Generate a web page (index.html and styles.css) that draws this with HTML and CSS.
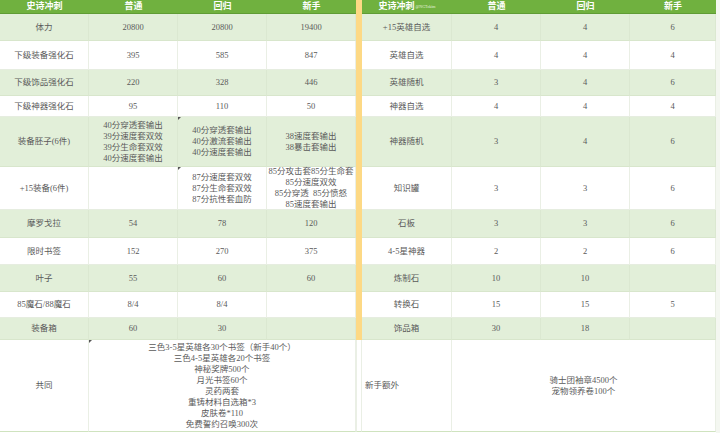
FILE: index.html
```html
<!DOCTYPE html>
<html lang="zh-CN">
<head>
<meta charset="utf-8">
<title>史诗冲刺</title>
<link rel="stylesheet" href="styles.css">
</head>
<body>
<div class="sheet">
  <div class="divider"></div>

  <div class="row head">
    <div class="c">史诗冲刺</div><div class="c">普通</div><div class="c">回归</div><div class="c">新手</div>
    <div class="c">史诗冲刺<span class="wm">@NGTokim</span></div><div class="c">普通</div><div class="c">回归</div><div class="c">新手</div>
  </div>

  <div class="row alt">
    <div class="c">体力</div><div class="c">20800</div><div class="c">20800</div><div class="c">19400</div>
    <div class="c">+15英雄自选</div><div class="c">4</div><div class="c">4</div><div class="c">6</div>
  </div>

  <div class="row">
    <div class="c">下级装备强化石</div><div class="c">395</div><div class="c">585</div><div class="c">847</div>
    <div class="c">英雄自选</div><div class="c">4</div><div class="c">4</div><div class="c">4</div>
  </div>

  <div class="row alt">
    <div class="c">下级饰品强化石</div><div class="c">220</div><div class="c">328</div><div class="c">446</div>
    <div class="c">英雄随机</div><div class="c">3</div><div class="c">4</div><div class="c">6</div>
  </div>

  <div class="row">
    <div class="c">下级神器强化石</div><div class="c">95</div><div class="c">110</div><div class="c">50</div>
    <div class="c">神器自选</div><div class="c">4</div><div class="c">4</div><div class="c">4</div>
  </div>

  <div class="row alt">
    <div class="c">装备胚子(6件)</div>
    <div class="c multi">40分穿透套输出<br>39分速度套双效<br>39分生命套双效<br>40分速度套输出</div>
    <div class="c multi note">40分穿透套输出<br>40分激流套输出<br>40分速度套输出</div>
    <div class="c multi">38速度套输出<br>38暴击套输出</div>
    <div class="c">神器随机</div><div class="c">3</div><div class="c">4</div><div class="c">6</div>
  </div>

  <div class="row">
    <div class="c">+15装备(6件)</div>
    <div class="c"></div>
    <div class="c multi note">87分速度套双效<br>87分生命套双效<br>87分抗性套血防</div>
    <div class="c multi">85分攻击套85分生命套<br>85分速度双效<br>85分穿透&nbsp;&nbsp;85分愤怒<br>85速度套输出</div>
    <div class="c">知识罐</div><div class="c">3</div><div class="c">3</div><div class="c">6</div>
  </div>

  <div class="row alt">
    <div class="c">摩罗戈拉</div><div class="c">54</div><div class="c">78</div><div class="c">120</div>
    <div class="c">石板</div><div class="c">3</div><div class="c">3</div><div class="c">6</div>
  </div>

  <div class="row">
    <div class="c">限时书签</div><div class="c">152</div><div class="c">270</div><div class="c">375</div>
    <div class="c">4-5星神器</div><div class="c">2</div><div class="c">2</div><div class="c">6</div>
  </div>

  <div class="row alt">
    <div class="c">叶子</div><div class="c">55</div><div class="c">60</div><div class="c">60</div>
    <div class="c">炼制石</div><div class="c">10</div><div class="c">10</div><div class="c"></div>
  </div>

  <div class="row">
    <div class="c">85魔石/88魔石</div><div class="c">8/4</div><div class="c">8/4</div><div class="c"></div>
    <div class="c">转换石</div><div class="c">15</div><div class="c">15</div><div class="c">5</div>
  </div>

  <div class="row alt">
    <div class="c">装备箱</div><div class="c">60</div><div class="c">30</div><div class="c"></div>
    <div class="c">饰品箱</div><div class="c">30</div><div class="c">18</div><div class="c"></div>
  </div>

  <div class="row last">
    <div class="c">共同</div>
    <div class="c multi span3 note">三色3-5星英雄各30个书签（新手40个）<br>三色4-5星英雄各20个书签<br>神秘奖牌500个<br>月光书签60个<br>灵药两套<br>重铸材料自选箱*3<br>皮肤卷*110<br>免费誓约召唤300次</div>
    <div class="c gap"></div>
    <div class="c left">新手额外</div>
    <div class="c multi span3">骑士团袖章4500个<br>宠物领养卷100个</div>
  </div>
</div>
</body>
</html>
```

FILE: styles.css
```css
* { box-sizing: border-box; }

html, body {
  margin: 0;
  padding: 0;
  background: #ffffff;
}

.sheet {
  width: 720px;
  height: 433px;
  display: grid;
  grid-template-columns: 89px 89px 89px 89px 6px 90px 89px 89px 86px;
  grid-template-rows: 14px 27px 29px 26px 21px 50px 43px 28px 27px 27px 26px 22px 92px;
  font-family: "Liberation Serif", "Noto Sans CJK SC", serif;
  font-size: 8.5px;
  color: #5a5a5a;
  border-right: 4px solid #f4f7f1;
}

.divider {
  grid-column: 5;
  grid-row: 1 / 13;
  background: #fdd985;
}

.row { display: contents; }

.c {
  display: flex;
  align-items: center;
  justify-content: center;
  text-align: center;
  white-space: nowrap;
  background: #ffffff;
  border-right: 1px solid #eaefe5;
  border-bottom: 1px solid #e6ede0;
  position: relative;
  line-height: 11px;
}

.row.alt > .c {
  background: #e2efd9;
  border-right-color: #dbe8d1;
  border-bottom-color: #d8e6cc;
}

.row.head > .c {
  background: #70b13f;
  color: #ffffff;
  font-weight: bold;
  font-size: 9px;
  border-right: none;
  border-bottom: 1px solid #5f9c35;
}

.wm {
  font-size: 4px;
  font-weight: normal;
  color: #e8f3df;
  margin-left: 1px;
  line-height: 4px;
  align-self: center;
}

.multi { line-height: 11px; }

.span3 { grid-column: span 3; }

.row.last > .c {
  border-bottom: 1px solid #cfe3bf;
}

.gap {
  border-left: 1px solid #eaefe5;
}

.left {
  justify-content: flex-start;
  padding-left: 3px;
}

.note::before {
  content: "";
  position: absolute;
  left: 0;
  top: 0;
  width: 0;
  height: 0;
  border-top: 3px solid #555555;
  border-right: 3px solid transparent;
}
```
